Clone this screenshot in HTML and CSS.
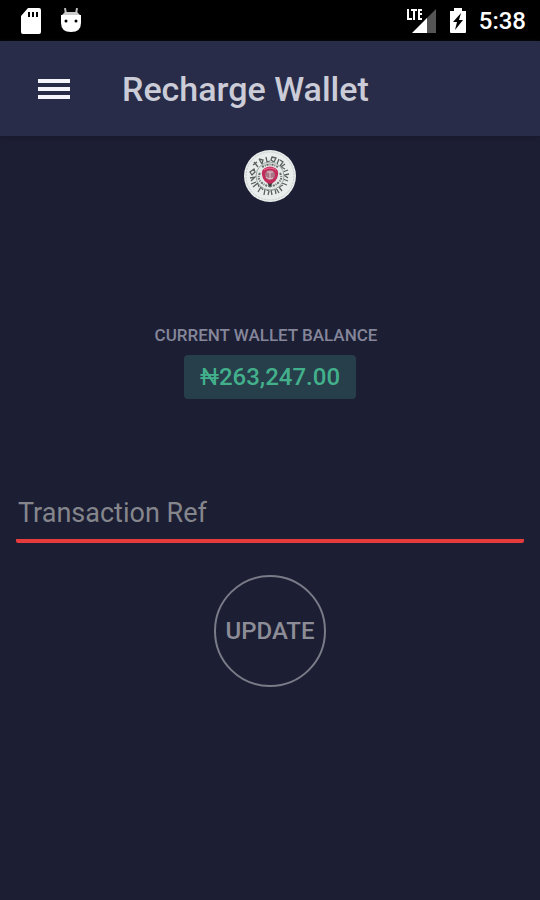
FILE: index.html
```html
<!DOCTYPE html>
<html lang="en">
<head>
<meta charset="utf-8">
<meta name="viewport" content="width=device-width, initial-scale=1">
<title>Recharge Wallet</title>
<link rel="stylesheet" href="styles.css">
</head>
<body>
<div class="status">
  <div class="status-group status-left">
    <svg width="22" height="26" viewBox="0 0 22 26" aria-hidden="true">
      <path fill="#fff" d="M8 0h11q2 0 2 2v22q0 2-2 2H3q-2 0-2-2V8z"/>
      <path fill="#000" d="M8 4h2v5H8zM12 4h2v5h-2zM16 4h2v5h-2z"/>
    </svg>
    <svg width="22" height="26" viewBox="0 0 22 26" aria-hidden="true">
      <path d="M5 0l1 6M17 0l-1 6" stroke="#bbb" stroke-width="2"/>
      <path fill="#ccc" d="M5 4h12l3 3H2z"/>
      <path fill="#fff" d="M1 7h20v8q0 9-10 9T1 15z"/>
      <circle cx="6" cy="13" r="1.5"/><circle cx="16" cy="13" r="1.5"/>
    </svg>
  </div>
  <div class="status-group">
    <svg width="32" height="26" viewBox="0 0 32 26" aria-hidden="true">
      <path fill="#555" d="M31 1v24H20V12z"/>
      <path fill="#fff" d="M22 10v15H7z"/>
      <path fill="none" stroke="#fff" stroke-width="2" d="M3 1v10h4M6 2h6M9 2v10M17 2h-3v9h3M14 6h3"/>
    </svg>
    <svg width="18" height="26" viewBox="0 0 18 26" aria-hidden="true">
      <path fill="#fff" d="M5 0h8v3h4v21q0 1-1 1H2q-1 0-1-1V3h4z"/>
      <path d="M12 5L4 14h4l-2 8 8-10h-4z"/>
    </svg>
    <span class="clock">5:38</span>
  </div>
</div>
<header class="bar">
  <button class="menu" type="button" aria-label="Menu">
    <svg width="32" height="22" viewBox="0 0 32 22" aria-hidden="true">
      <path fill="#f4f4fa" d="M0 1h32v4H0zM0 9h32v4H0zM0 17h32v4H0z"/>
    </svg>
  </button>
  <h1 class="title">Recharge Wallet</h1>
</header>
<main class="content">
  <svg class="logo" width="52" height="52" viewBox="0 0 52 52" role="img" aria-label="Logo">
    <circle cx="26" cy="26" r="26" fill="#e9eeec"/>
    <circle cx="26" cy="26" r="24" fill="none" stroke="#c5cccb" stroke-width="1" stroke-dasharray="2 1"/>
    <path fill="none" stroke="#59615f" stroke-width="1.3" d="M6 22l4-3 1 3-3 3zM9 15l4-3M10 12l4 5M15 9l3 5M15 9l4 1-1 4M22 7l1 5 3-1M28 7l4 1-2 4-3-2zM35 9l-2 5M36 10l3 2-3 4M41 14l-4 3 4 2M44 20l-5 2M45 24l-5 1 4 3M6 28l5-1-4 4M7 34l5-2M9 37l5-4 1 4M14 42l3-5 2 3M20 45l1-6 4 2-1 4M28 45l-1-5 4-1 1 5M35 43l-3-5M38 41l-3-4 4-2M43 35l-5-2M44 31l-5-2"/>
    <circle cx="26" cy="26" r="14" fill="#e4e9e7" stroke="#9aa3a0" stroke-width="1"/>
    <path fill="none" stroke="#68706c" stroke-width="2" stroke-dasharray="2 1 1 1" d="M16 23q-3 5 1 9 4 4 8 4M36 23q3 5-1 9-4 4-8 4M18 17q8-5 16 0"/>
    <path fill="#353b39" d="M23 32h6l-3 6z"/>
    <path fill="#c22c5b" d="M21 18q5-3 10 0 4 2 3 7-1 7-8 9-7-2-8-9-1-5 3-7z"/>
    <circle cx="26" cy="25" r="5" fill="#a77586"/>
    <path fill="none" stroke="#e8c5ce" stroke-width="1" d="M23 22h6M26 22v7M22 27l3 2 4-1"/>
    <path fill="none" stroke="#ef6b8f" stroke-width="1" d="M20 20q6-4 12 0"/>
  </svg>
  <section class="balance">
    <h2 class="balance-label">CURRENT WALLET BALANCE</h2>
    <div class="amount"><span class="currency">₦</span>263,247.00</div>
  </section>
  <form class="form">
    <input class="field" type="text" placeholder="Transaction Ref" aria-label="Transaction Ref">
    <button class="update" type="button">UPDATE</button>
  </form>
</main>
</body>
</html>
```
FILE: styles.css
```css
* {
  box-sizing: border-box;
}

body {
  margin: 0;
  min-height: 100vh;
  background: #1c1e34;
  font-family: Roboto, "Liberation Sans", sans-serif;
}

.status {
  display: flex;
  justify-content: space-between;
  align-items: center;
  height: 41px;
  padding: 0 14px 0 20px;
  background: #000;
}

.status-group {
  display: flex;
  align-items: center;
  gap: 12px;
}

.status-left {
  gap: 18px;
}

.clock {
  color: #fff;
  font-size: 24px;
  line-height: 28px;
  font-weight: 500;
}

.bar {
  display: flex;
  align-items: center;
  gap: 40px;
  height: 95px;
  padding: 0 26px;
  background: #292c49;
  box-shadow: 0 1px 4px #171829;
}

.menu {
  display: flex;
  padding: 12px;
  border: 0;
  background: none;
}

.title {
  margin: 0;
  color: #cbccd7;
  font-size: 34px;
  line-height: 40px;
  font-weight: 500;
}

.content {
  display: flex;
  flex-direction: column;
  align-items: center;
  padding: 14px 16px;
}

.balance {
  display: flex;
  flex-direction: column;
  align-items: center;
  gap: 10px;
  margin-top: 123px;
}

.balance-label {
  margin: 0;
  padding-right: 8px;
  color: #85869a;
  font-size: 17px;
  line-height: 20px;
  font-weight: 500;
}

.amount {
  padding: 8px 16px;
  border-radius: 4px;
  background: #273e4b;
  color: #43b08c;
  font-size: 24px;
  line-height: 28px;
  font-weight: 500;
}

.currency {
  font-weight: 400;
}

.form {
  display: flex;
  flex-direction: column;
  align-items: center;
  gap: 32px;
  width: 100%;
  margin-top: 88px;
}

.field {
  width: 100%;
  height: 56px;
  padding: 0 2px;
  border: 0;
  border-bottom: 4px solid #e53b3d;
  border-radius: 2px;
  outline: 0;
  background: none;
  color: #cbccd7;
  font: 400 27px/32px Roboto, "Liberation Sans", sans-serif;
}

.field::placeholder {
  color: #85868c;
  opacity: 1;
}

.update {
  width: 112px;
  height: 112px;
  padding: 0;
  border: 2px solid #797b87;
  border-radius: 50%;
  background: none;
  color: #8c8d97;
  font: 500 24px/28px Roboto, "Liberation Sans", sans-serif;
}
```
